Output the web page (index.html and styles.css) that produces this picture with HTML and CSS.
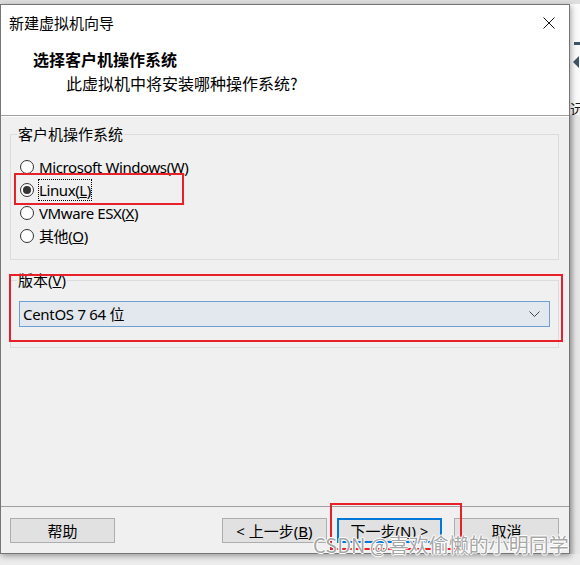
FILE: index.html
```html
<!DOCTYPE html>
<html lang="zh-CN">
<head>
<meta charset="utf-8">
<title>新建虚拟机向导</title>
<link rel="stylesheet" href="styles.css">
</head>
<body>
<div class="screen">
  <div class="topstrip"></div>
  <div class="row">
    <div class="window">
      <div class="head">
        <div class="titlebar">
          <span class="title">新建虚拟机向导</span>
          <svg class="close" width="12" height="12" viewBox="0 0 12 12"><path d="M0.5 0.5L11.5 11.5M11.5 0.5L0.5 11.5" stroke="#111" stroke-width="1" fill="none"/></svg>
        </div>
        <div class="h1">选择客户机操作系统</div>
        <div class="h2">此虚拟机中将安装哪种操作系统?</div>
      </div>
      <div class="body">
        <fieldset class="group">
          <legend>客户机操作系统</legend>
          <div class="radio"><span class="dot"></span><span class="lbl">Microsoft Windows(<u>W</u>)</span></div>
          <div class="radio"><span class="dot on"></span><span class="lbl focus">Linux(<u>L</u>)</span></div>
          <div class="radio"><span class="dot"></span><span class="lbl">VMware ESX(<u>X</u>)</span></div>
          <div class="radio"><span class="dot"></span><span class="lbl">其他(<u>O</u>)</span></div>
        </fieldset>
        <fieldset class="group group2">
          <legend>版本(<u>V</u>)</legend>
          <div class="select">
            <span>CentOS 7 64 位</span>
            <svg class="chev" width="11" height="6" viewBox="0 0 11 6"><path d="M0.5 0.5L5.5 5.5L10.5 0.5" stroke="#444" stroke-width="1" fill="none"/></svg>
          </div>
        </fieldset>
        <div class="footer">
          <div class="btn">帮助</div>
          <div class="btn back">&lt; 上一步(<u>B</u>)</div>
          <div class="btn next">下一步(<u>N</u>) &gt;</div>
          <div class="btn">取消</div>
        </div>
      </div>
    </div>
    <div class="side">
      <div class="side-top">
        <span class="side-dash"></span>
        <span class="side-tri"></span>
        <span class="side-char">远</span>
      </div>
    </div>
  </div>
  <div class="mark mark1"></div>
  <div class="mark mark2"></div>
  <div class="mark mark3"></div>
  <div class="watermark">CSDN @喜欢偷懒的小明同学</div>
</div>
</body>
</html>
```
FILE: styles.css
```css
* { box-sizing: border-box; }
html, body { margin: 0; padding: 0; }
body {
  width: 580px;
  height: 565px;
  overflow: hidden;
  background: #ececec;
  font-family: "Noto Sans", "Noto Sans CJK SC", sans-serif;
  font-size: 15px;
  color: #000;
}
.screen {
  position: relative;
  width: 580px;
  height: 565px;
  overflow: hidden;
}
.topstrip {
  height: 4px;
  background: #dedede;
}
.row {
  display: flex;
}
.window {
  width: 570px;
  height: 550px;
  border: 1px solid #767676;
  background: #f0f0f0;
  display: flex;
  flex-direction: column;
  box-shadow: 1px 2px 6px rgba(0,0,0,0.35);
  position: relative;
  z-index: 1;
}
.head {
  background: #fff;
  height: 111px;
  border-bottom: 1px solid #a0a0a0;
  box-shadow: 0 1px 0 #fff;
}
.titlebar {
  height: 34px;
  display: flex;
  align-items: center;
  justify-content: space-between;
  padding: 0 14px 0 8px;
}
.title {
  font-family: "Noto Sans CJK SC", sans-serif;
  font-size: 15px;
  line-height: 20px;
  padding-top: 2px;
}
.close { display: block; margin-top: 2px; }
.h1 {
  font-family: "Noto Sans CJK SC", sans-serif;
  font-weight: bold;
  font-size: 16px;
  line-height: 20px;
  padding-left: 32px;
  margin-top: 10px;
}
.h2 {
  font-family: "Noto Sans CJK SC", sans-serif;
  font-size: 16px;
  line-height: 20px;
  padding-left: 65px;
  margin-top: 4px;
}
.body {
  flex: 1;
  display: flex;
  flex-direction: column;
  padding-top: 9px;
}
.group {
  margin: 0 10px 0 9px;
  padding: 12px 6px 12px 6px;
  border: 1px solid #dcdcdc;
  min-width: 0;
}
.group legend {
  padding: 0 1px;
  line-height: 18px;
  font-size: 15px;
}
.group2 {
  margin-top: 11px;
  padding: 12px 6px 20px 6px;
}
.radio {
  height: 23px;
  display: flex;
  align-items: center;
  padding-left: 3px;
}
.dot {
  width: 14px;
  height: 14px;
  border: 1px solid #333;
  border-radius: 50%;
  background: #fff;
  margin-right: 4px;
  flex: none;
  display: flex;
  align-items: center;
  justify-content: center;
}
.dot.on::after {
  content: "";
  width: 8px;
  height: 8px;
  border-radius: 50%;
  background: #333;
}
.lbl {
  line-height: 20px;
  padding: 0;
  border: 1px solid transparent;
  letter-spacing: -0.4px;
}
.lbl.focus {
  border: 1px dotted #000;
}
.select {
  margin-left: 2px;
  width: 531px;
  height: 26px;
  border: 1px solid #6e9fd2;
  background: #e3e8ee;
  display: flex;
  align-items: center;
  justify-content: space-between;
  padding: 0 9px 0 3px;
  line-height: 20px;
  letter-spacing: -0.3px;
}
.chev { display: block; }
.footer {
  margin-top: auto;
  border-top: 1px solid #a0a0a0;
  height: 47px;
  padding: 11px 10px 10px 9px;
  display: flex;
  align-items: flex-start;
}
.btn {
  width: 105px;
  height: 25px;
  background: #e1e1e1;
  border: 1px solid #adadad;
  display: flex;
  align-items: center;
  justify-content: center;
  line-height: 20px;
  font-size: 15px;
}
.btn.back { margin-left: auto; }
.btn.next {
  margin-left: 10px;
  border: 2px solid #0078d7;
}
.btn + .btn:last-child { margin-left: 12px; }
.side {
  flex: 1;
  background: linear-gradient(to right, #c9c9c9, #e6e6e6 6px);
}
.side-top {
  height: 111px;
  background: #fafafa;
  position: relative;
  overflow: hidden;
}
.side-dash {
  position: absolute;
  left: 4px;
  top: 38px;
  width: 8px;
  height: 3px;
  background: #3e5468;
}
.side-tri {
  position: absolute;
  left: 3px;
  top: 52px;
  width: 0;
  height: 0;
  border-top: 6px solid transparent;
  border-bottom: 6px solid transparent;
  border-right: 6px solid #3e5468;
}
.side-char {
  position: absolute;
  left: 0;
  top: 96px;
  font-family: "Noto Sans CJK SC", sans-serif;
  font-size: 15px;
  line-height: 18px;
  color: #1a1a1a;
}
.mark {
  position: absolute;
  border: 2px solid #e8202a;
  z-index: 3;
}
.mark1 { left: 14px; top: 173px; width: 170px; height: 32px; }
.mark2 { left: 9px; top: 274px; width: 554px; height: 68px; }
.mark3 { left: 330px; top: 503px; width: 132px; height: 47px; }
.watermark {
  position: absolute;
  left: 313px;
  top: 532px;
  z-index: 4;
  font-family: "Noto Sans CJK SC", sans-serif;
  font-size: 20px;
  line-height: 26px;
  color: rgba(150,150,150,0.85);
  text-shadow: 1px 0 0 #fff, -1px 0 0 #fff, 0 1px 0 #fff, 0 -1px 0 #fff;
  white-space: nowrap;
}
```
